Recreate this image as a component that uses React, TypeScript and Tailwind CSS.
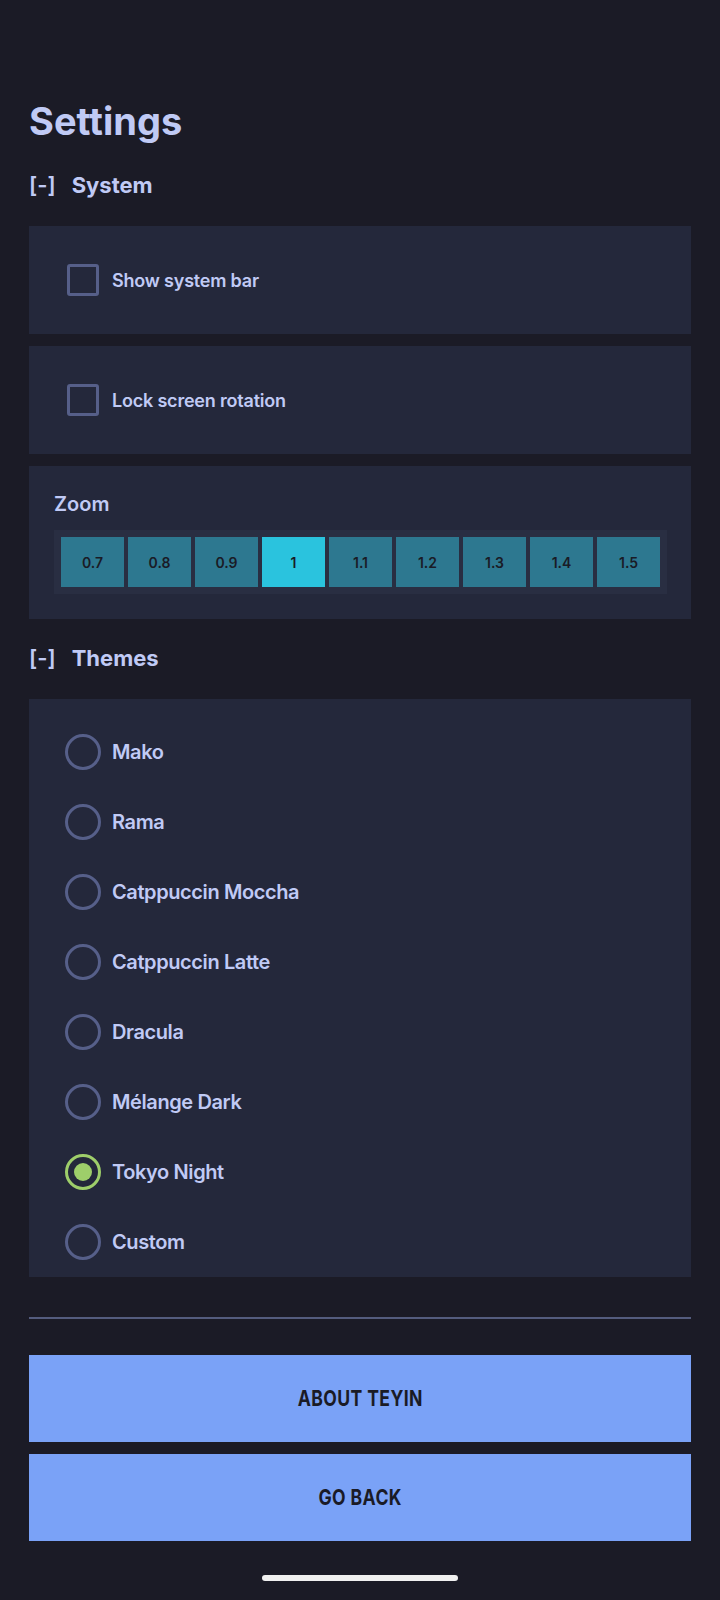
import { useState } from "react";

const zoomLevels = ["0.7", "0.8", "0.9", "1", "1.1", "1.2", "1.3", "1.4", "1.5"];
const themes = [
  "Mako",
  "Rama",
  "Catppuccin Moccha",
  "Catppuccin Latte",
  "Dracula",
  "Mélange Dark",
  "Tokyo Night",
  "Custom",
];

function SectionHeader({ title }: { title: string }) {
  return (
    <div className="flex items-center gap-[16px] text-[22px] leading-none font-bold text-[#c0caf5]">
      <span className="font-semibold">[-]</span>
      <span>{title}</span>
    </div>
  );
}

function CheckRow({ label, checked, onToggle }: { label: string; checked: boolean; onToggle: () => void }) {
  return (
    <button
      onClick={onToggle}
      className="flex h-[108px] w-full items-center gap-[13px] bg-[#24283b] pl-[38px] text-left"
    >
      <span
        className={
          "flex h-[32px] w-[32px] items-center justify-center rounded-[3px] border-[3px] " +
          (checked ? "border-[#9ece6a] bg-[#9ece6a]" : "border-[#565f89]")
        }
      />
      <span className="text-[18px] font-semibold tracking-[-0.2px] text-[#c0caf5]">{label}</span>
    </button>
  );
}

export default function App() {
  const [systemBar, setSystemBar] = useState(false);
  const [lockRotation, setLockRotation] = useState(false);
  const [zoom, setZoom] = useState("1");
  const [theme, setTheme] = useState("Tokyo Night");

  return (
    <div
      className="flex min-h-[1600px] flex-col bg-[#1b1b26] px-[29px]"
      style={{ fontFamily: "Inter, 'Noto Sans', sans-serif" }}
    >
      <h1 className="pt-[102px] text-[38px] leading-none font-bold text-[#c0caf5]">Settings</h1>

      <div className="mt-[34px]">
        <SectionHeader title="System" />
      </div>

      <div className="mt-[30px] flex flex-col gap-[12px]">
        <CheckRow label="Show system bar" checked={systemBar} onToggle={() => setSystemBar(!systemBar)} />
        <CheckRow label="Lock screen rotation" checked={lockRotation} onToggle={() => setLockRotation(!lockRotation)} />

        <div className="flex h-[153px] flex-col bg-[#24283b] pt-[28px] pl-[25px]">
          <span className="text-[20px] leading-none font-semibold text-[#c0caf5]">Zoom</span>
          <div className="mt-[16px] flex w-fit gap-[4px] bg-[#292e42] p-[7px]">
            {zoomLevels.map((z) => (
              <button
                key={z}
                onClick={() => setZoom(z)}
                className={
                  "flex h-[50px] w-[63px] items-center justify-center text-[14px] font-semibold text-[#1a1b26] " +
                  (zoom === z ? "bg-[#2ac3de]" : "bg-[#2d7890]")
                }
              >
                {z}
              </button>
            ))}
          </div>
        </div>
      </div>

      <div className="mt-[28px]">
        <SectionHeader title="Themes" />
      </div>

      <div className="mt-[30px] flex flex-col bg-[#24283b] pt-[18px]">
        {themes.map((t) => {
          const active = theme === t;
          return (
            <button
              key={t}
              onClick={() => setTheme(t)}
              className="flex h-[70px] items-center gap-[11px] pl-[36px] text-left"
            >
              <span
                className={
                  "flex h-[36px] w-[36px] items-center justify-center rounded-full border-[3px] " +
                  (active ? "border-[#9ece6a]" : "border-[#565f89]")
                }
              >
                {active && <span className="h-[18px] w-[18px] rounded-full bg-[#9ece6a]" />}
              </span>
              <span className="text-[20px] font-semibold tracking-[-0.4px] text-[#c0caf5]">{t}</span>
            </button>
          );
        })}
      </div>

      <div className="mt-[40px] h-[2px] bg-[#545c7e]" />

      <div className="mt-[36px] flex flex-col gap-[12px]">
        {["ABOUT TEYIN", "GO BACK"].map((label) => (
          <button key={label} className="flex h-[87px] items-center justify-center bg-[#7aa2f7]">
            <span className="inline-block scale-x-[0.8] text-[22px] font-bold tracking-[0.5px] text-[#1a1b26]">
              {label}
            </span>
          </button>
        ))}
      </div>

      <div className="mt-[34px] flex justify-center">
        <div className="h-[6px] w-[196px] rounded-full bg-[#f0f0f0]" />
      </div>
    </div>
  );
}
